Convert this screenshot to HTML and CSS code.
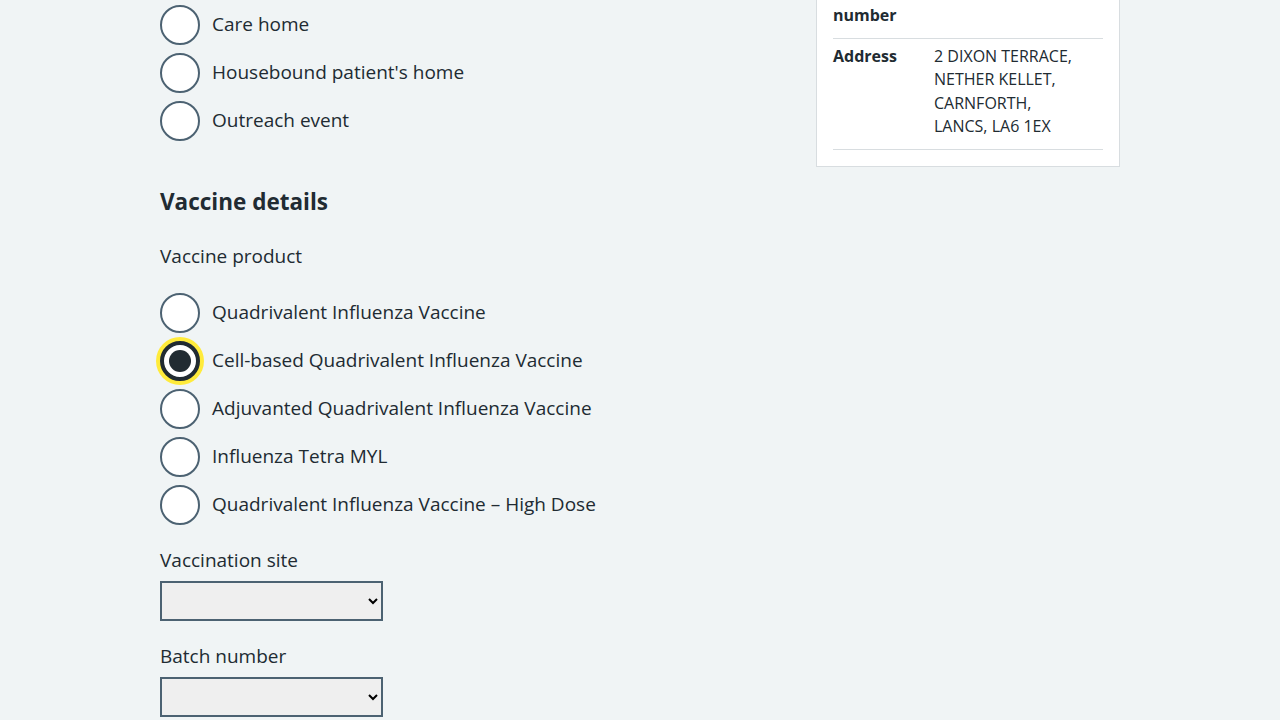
FILE: index.html
```html
<!DOCTYPE html>
<html lang="en">
<head>
<meta charset="utf-8">
<title>Record vaccination</title>
<link rel="stylesheet" href="styles.css">
</head>
<body>
<main class="page">
  <div class="layout">
    <div class="main-col">
      <div class="radios">
        <div class="radio-item"><span class="radio"></span><span class="radio-label">Hospital</span></div>
        <div class="radio-item"><span class="radio"></span><span class="radio-label">Care home</span></div>
        <div class="radio-item"><span class="radio"></span><span class="radio-label">Housebound patient's home</span></div>
        <div class="radio-item"><span class="radio"></span><span class="radio-label">Outreach event</span></div>
      </div>

      <h2 class="section-heading">Vaccine details</h2>

      <div class="field-label">Vaccine product</div>
      <div class="radios radios-product">
        <div class="radio-item"><span class="radio"></span><span class="radio-label">Quadrivalent Influenza Vaccine</span></div>
        <div class="radio-item"><span class="radio radio-checked radio-focus"></span><span class="radio-label">Cell-based Quadrivalent Influenza Vaccine</span></div>
        <div class="radio-item"><span class="radio"></span><span class="radio-label">Adjuvanted Quadrivalent Influenza Vaccine</span></div>
        <div class="radio-item"><span class="radio"></span><span class="radio-label">Influenza Tetra MYL</span></div>
        <div class="radio-item"><span class="radio"></span><span class="radio-label">Quadrivalent Influenza Vaccine – High Dose</span></div>
      </div>

      <div class="form-group">
        <label class="select-label" for="site">Vaccination site</label>
        <select id="site" class="select"><option></option></select>
      </div>
      <div class="form-group">
        <label class="select-label" for="batch">Batch number</label>
        <select id="batch" class="select"><option></option></select>
      </div>
    </div>

    <aside class="side-col">
      <div class="card">
        <dl class="summary">
          <div class="summary-row summary-row-first">
            <dt class="summary-key">NHS number</dt>
            <dd class="summary-value">943 476 5919</dd>
          </div>
          <div class="summary-row">
            <dt class="summary-key">Address</dt>
            <dd class="summary-value">2 DIXON TERRACE,<br>NETHER KELLET,<br>CARNFORTH,<br>LANCS, LA6 1EX</dd>
          </div>
        </dl>
      </div>
    </aside>
  </div>
</main>
</body>
</html>
```

FILE: styles.css
```css
* { box-sizing: border-box; }

html, body {
  margin: 0;
  padding: 0;
  background: #f0f4f5;
  color: #212b32;
  font-family: "Open Sans", "Noto Sans", sans-serif;
}

.page {
  width: 960px;
  margin: -46px auto 0;
}

.layout {
  display: flex;
  align-items: flex-start;
  gap: 16px;
}

.main-col {
  flex: 1;
  padding-top: 3px;
}

.side-col {
  width: 304px;
  flex: none;
}

.radios {
  display: flex;
  flex-direction: column;
  gap: 8px;
}

.radio-item {
  display: flex;
  align-items: center;
  gap: 12px;
  height: 40px;
}

.radio {
  width: 40px;
  height: 40px;
  flex: none;
  border: 2px solid #4c6272;
  border-radius: 50%;
  background: #ffffff;
  position: relative;
}

.radio-checked {
  border: 4px solid #212b32;
}

.radio-checked::after {
  content: "";
  position: absolute;
  left: 5px;
  top: 5px;
  width: 22px;
  height: 22px;
  border-radius: 50%;
  background: #212b32;
}

.radio-focus {
  box-shadow: 0 0 0 4px #ffeb3b;
}

.radio-label {
  font-size: 19px;
  line-height: 28px;
  margin-top: -3px;
}

.section-heading {
  font-size: 22.5px;
  line-height: 32px;
  font-weight: 700;
  margin: 45px 0 24px;
}

.field-label {
  font-size: 19px;
  line-height: 28px;
  margin-bottom: 23px;
}

.form-group {
  display: flex;
  flex-direction: column;
  align-items: flex-start;
  margin-top: 21px;
}

.select-label {
  font-size: 19px;
  line-height: 28px;
  margin-bottom: 7px;
}

.select {
  width: 223px;
  height: 40px;
  border: 2px solid #4c6272;
  border-radius: 0;
  background: #efefef;
  font-size: 16px;
}

.card {
  background: #ffffff;
  border: 1px solid #d8dde0;
  padding: 0 16px 16px;
}

.summary {
  margin: 0;
  font-size: 16px;
  line-height: 23.4px;
}

.summary-row {
  display: flex;
  border-bottom: 1px solid #d8dde0;
  padding: 6px 0 11px;
}

.summary-row-first {
  padding-top: 26px;
  padding-bottom: 10px;
}

.summary-key {
  width: 101px;
  flex: none;
  font-weight: 700;
  padding-right: 16px;
}

.summary-value {
  margin: 0;
  flex: 1;
}
```
